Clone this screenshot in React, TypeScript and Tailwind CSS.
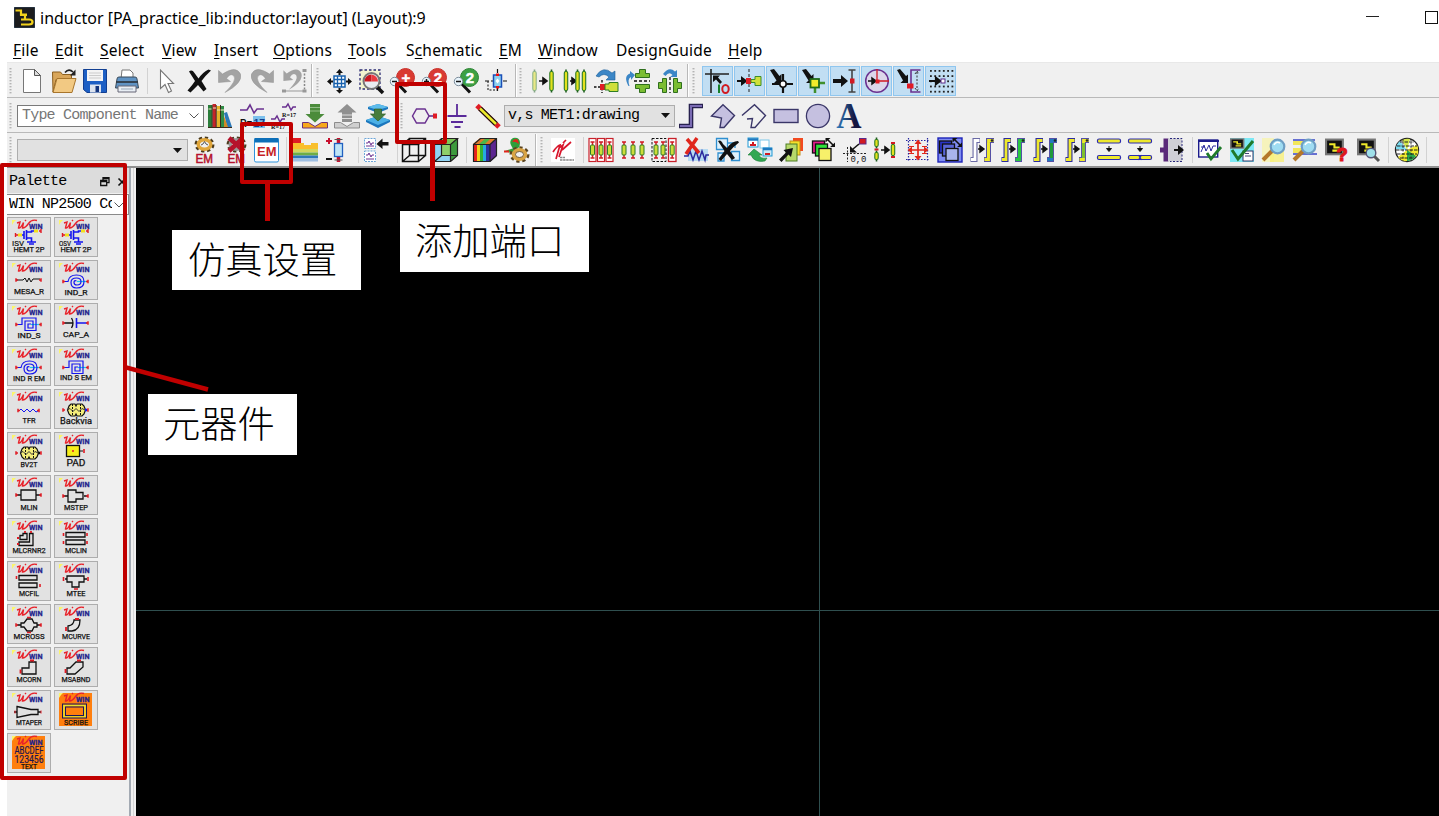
import React from "react";

type Kids = { children?: React.ReactNode };

const Ic = ({ children }: Kids) => (
  <svg width="24" height="24" viewBox="0 0 24 24" fill="none" className="block flex-none overflow-visible">
    {children}
  </svg>
);

const Grip = ({ className = "" }: { className?: string }) => (
  <svg width="4" height="28" viewBox="0 0 4 28" className={"block flex-none " + className}>
    {Array.from({ length: 9 }, (_, i) => (
      <rect key={i} x="0.5" y={1 + i * 3} width="2" height="1.4" fill="#b4b4b4" />
    ))}
  </svg>
);

const Group = ({ className, items }: { className: string; items: React.ReactNode[] }) => (
  <div className={"flex h-full flex-none items-center " + className}>
    {items.map((it, i) => (
      <div key={i} className="flex min-w-0 flex-1 items-center justify-center">
        {it}
      </div>
    ))}
  </div>
);

const Sep = ({ className = "" }: { className?: string }) => (
  <div className={"h-[26px] w-px flex-none bg-[#d2d2d2] " + className} />
);
const Divider = ({ className = "" }: { className?: string }) => (
  <div className={"h-full w-[2px] flex-none border-l border-[#b8b8b8] bg-white " + className} />
);

const magnifier = (big: string, sign: React.ReactNode, ring = "#c9302a", plus = false) => (
  <Ic>
    <path d="M7 14l9 9.500" stroke="#111" strokeWidth="3" />
    <circle cx="15.500" cy="8.500" r="9" fill={big} stroke={ring} strokeWidth="1" />
    <text x="16" y="14" textAnchor="middle" fontSize="15" fontWeight="700" fill="#fff" stroke="#fff" strokeWidth=".5" className="font-['Liberation_Sans']">
      {sign}
    </text>
    <circle cx="4.500" cy="12.500" r="4.200" fill="#e8f4fb" stroke="#7a8a99" />
    <path d={plus ? "M2 12.500h5M4.500 10v5" : "M2 12.500h5"} stroke="#111" strokeWidth="1.500" />
  </Ic>
);

const Bar = ({ x, y = 1, h = 22, fill = "#e4e21c", op = 1 }: { x: number; y?: number; h?: number; fill?: string; op?: number }) => (
  <g opacity={op}>
    <path d={`M${x} ${y - 0.5}v${h + 1}`} stroke="#1f5c20" strokeWidth="1.6" />
    <rect x={x - 1.7} y={y + 1.5} width="3.4" height={h - 3} rx="1.4" fill={fill} stroke="#2c7a25" strokeWidth="1.1" />
  </g>
);

const arrow = (x1: number, x2: number, y: number, w = 1.6) => (
  <path d={`M${x1} ${y}H${x2 - 3}M${x2 - 4} ${y - 3}L${x2} ${y}L${x2 - 4} ${y + 3}Z`} stroke="#111" strokeWidth={w} fill="#111" />
);

const sheet = (
  <Ic>
    <path d="M3.5.5h11l6 6v17h-17z" fill="#fff" stroke="#777" />
    <path d="M14.5.5v6h6z" fill="#ddd" stroke="#555" />
  </Ic>
);
const folder = (
  <Ic>
    <path d="M.500 3h8l2 2.500h9v5H4L1 23z" fill="#d9a65a" stroke="#8c5f1f" />
    <path d="M5 9.500h19L20 23.500H1z" fill="#f2c983" stroke="#a8752c" />
    <path d="M13 3.500q4-4.500 8-.5" stroke="#222" strokeWidth="1.600" />
    <path d="M23.500.500v6h-5.500z" fill="#222" />
  </Ic>
);
const floppy = (
  <Ic>
    <path d="M.5.5h23v23H4l-3.500-3z" fill="#1d5fc4" stroke="#123f92" />
    <rect x="4" y="1" width="16" height="11" fill="#f4f4f4" />
    <path d="M6 4h12M6 6.500h12M6 9h12" stroke="#ccc" />
    <rect x="7" y="15.500" width="11" height="8" fill="#dce3ee" />
    <rect x="12.500" y="17" width="3.500" height="6" fill="#14357e" />
  </Ic>
);
const printer = (
  <Ic>
    <path d="M6 10L7 1h8l3 3v6z" fill="#fff" stroke="#777" />
    <path d="M2 10q0-2 2-2h16q2 0 2 2l1.500 9H.5z" fill="#5f93c4" stroke="#3a4a59" />
    <path d="M1 13h22" stroke="#2f3c48" strokeWidth="1.800" />
    <path d="M3 17h18v6H3z" fill="#e8eef4" stroke="#667" />
    <path d="M6 20h12" stroke="#9ab" />
  </Ic>
);
const cursor = (
  <Ic>
    <path d="M5.500 1v18.500l4.500-4 3.500 8 3-1.500-3.500-7.500h5.500z" fill="#fff" stroke="#777" strokeWidth="1.100" />
  </Ic>
);
const cross = (
  <Ic>
    <path d="M2 2.500Q5 0 7.500 4l4 5.500Q16 3 21.500.500L24 1.500Q18 7 14.500 12l5 8-3 2.500L11 16 3.500 23.500.500 21.500q5-5.500 7.500-9.500z" fill="#111" />
  </Ic>
);
const undoPath = "M.5 1.500V13.500L12.500 12.500 8.500 9.500Q12 4 15.500 6.500 20 11 7 23.500 25 14 22.500 5 18-4 4.500 5z";
const undo = (
  <Ic>
    <path d={undoPath} fill="#a3a3a3" stroke="#919191" strokeWidth=".5" />
  </Ic>
);
const redo = (
  <Ic>
    <g transform="translate(24 0) scale(-1 1)">
      <path d={undoPath} fill="#a3a3a3" stroke="#919191" strokeWidth=".5" />
    </g>
  </Ic>
);
const undoAll = (
  <Ic>
    <g transform="translate(1 0) scale(.82 .88)">
      <path d={undoPath} fill="#a3a3a3" />
    </g>
    <path d="M1 22h21" stroke="#999" />
    <path d="M22.500 1v20" stroke="#888" strokeWidth="1.500" strokeDasharray="2 1.500" />
    <path d="M0 20.500h4v3H0zM20.500 20.500h4v3h-4zM20.500 0h4v3h-4z" fill="#999" />
  </Ic>
);
const pan = (
  <Ic>
    <rect x="7" y="7" width="11" height="11" fill="#fff" stroke="#1760ad" strokeWidth="1.500" />
    <path d="M10.500 7v11M14.500 7v11M7 10.500h11M7 14.500h11" stroke="#1760ad" strokeWidth="1.300" />
    <path d="M12.500 0l3.500 4h-2.500v2h-2V4H9zM12.500 24.500L16 21h-2.500v-2h-2v2H9zM0 12.500L4 9v2.500h2v2H4V16zM25 12.500L21 9v2.500h-2v2h2V16z" fill="#111" />
  </Ic>
);
const zoomArea = (
  <Ic>
    <rect x="1" y="1" width="20" height="19" stroke="#2a2a72" strokeWidth="1.300" strokeDasharray="2.500 2" fill="#f2f4cf" />
    <path d="M18 18l6 6" stroke="#111" strokeWidth="3.500" />
    <circle cx="12.500" cy="12" r="8" fill="#e9edf2" stroke="#777" strokeWidth="2" />
    <path d="M12.500 12.500V5.500a7 7 0 0 0-7 7z" fill="#c9161d" />
    <path d="M12.500 5.500a7 7 0 0 1 6.500 7h-6.500z" fill="#ea3a3f" />
  </Ic>
);
const zoomCenter = (
  <Ic>
    <path d="M12.500 0v24M0 12h24" stroke="#111" strokeWidth="1.200" strokeDasharray="4 2" />
    <path d="M3 12v9h9" stroke="#111" strokeDasharray="2 1.500" />
    <rect x="8.500" y="6" width="8" height="12" fill="#8fd0ef" stroke="#1a4fb8" strokeWidth="1.500" />
    <path d="M12.500 9.500l2 2.500-2 2.500-2-2.500z" fill="#fff" />
    <rect x="11" y="4.500" width="3" height="2.500" fill="#e11" />
    <rect x="11" y="17" width="3" height="2.500" fill="#e11" />
  </Ic>
);
const blueArc = "M2 7Q9-4 18 4l3-2v9h-9l3-3Q10 3 5 8z";
const iMove1 = (<Ic><Bar x={3.500} op={0.5} />{arrow(8, 16, 12)}<Bar x={20.500} /></Ic>);
const iMove2 = (<Ic><Bar x={3} />{arrow(7, 13, 12)}<Bar x={14.500} /><Bar x={21} /></Ic>);
const rotBar = (
  <Ic>
    <path d={blueArc} fill="#3b86c6" stroke="#1f5f99" strokeWidth=".6" />
    <path d="M0 18h6M8 11v13" stroke="#111" strokeWidth="1.400" strokeDasharray="2.500 1.500" />
    <rect x="6" y="15" width="5" height="6" fill="#e01b24" />
    <path d="M11 15h4v-1.500h9v9h-9V21h-4z" fill="#cfe03a" stroke="#2f7d24" />
  </Ic>
);
const flipV = (
  <Ic>
    <path d="M2.500 17Q-3 7 4 4.500V2l5 4-4 5V8Q1 10 3.500 17z" fill="#3b86c6" />
    <path d="M8 12h16" stroke="#111" strokeWidth="1.300" strokeDasharray="3 2" />
    <g fill="#7bbd33" stroke="#2f6f1e">
      <path d="M9.500 4.500h4v-4h6v4h4v4h-14zM9.500 15.500h14v4h-4v4h-6v-4h-4z" />
    </g>
  </Ic>
);
const flipH = (
  <Ic>
    <path d="M5 5Q11-3 17 2.500L19 1v7h-7l2.500-2Q11 2 7.500 7z" fill="#3b86c6" />
    <path d="M12 8v16" stroke="#111" strokeWidth="1.300" strokeDasharray="3 2" />
    <g fill="#7bbd33" stroke="#2f6f1e">
      <path d="M8.500 9.500v14h-4v-4h-4v-6h4v-4zM15.500 9.500v14h4v-4h4v-6h-4v-4z" />
    </g>
  </Ic>
);

const bigArrow = "M1 1l4-1 5.500 7 2-2v9H5l2.500-2.500z";
const snaps = [
  <Ic>
    <path d="M0 5h24M6 0v24" stroke="#222" strokeWidth="1.600" />
    <path d="M8 6.500h7l-2 2 4 4.500-2 2-4-4.500-3 2.500z" fill="#111" />
    <path d="M14 15.500v8.500" stroke="#17812a" strokeWidth="2" />
    <ellipse cx="20.500" cy="20" rx="3.200" ry="4" stroke="#d11a22" strokeWidth="2" />
  </Ic>,
  <Ic>
    {arrow(0, 9, 12, 2)}
    <path d="M12 0v24" stroke="#222" strokeDasharray="3 2" />
    <rect x="9" y="9" width="5" height="6" fill="#e01b24" />
    <path d="M14 10.500h4V7.500h6v9h-6v-3h-4z" fill="#cfe03a" stroke="#3c8d2a" />
  </Ic>,
  <Ic>
    <path d="M14 5v19M3 15h21" stroke="#111" strokeWidth="2.200" />
    <path d={bigArrow} fill="#111" />
    <circle cx="14" cy="15" r="3.200" fill="#fff" stroke="#111" strokeWidth="1.600" />
  </Ic>,
  <Ic>
    <path d={bigArrow} fill="#111" />
    <path d="M14 14v10M14 14h10" stroke="#3f8f2c" strokeWidth="2.500" />
    <rect x="9.500" y="10" width="8.500" height="8.500" fill="#f2ec2b" stroke="#1f6b1b" strokeWidth="1.800" />
  </Ic>,
  <Ic>
    <path d="M0 10h8V6l7 6-7 6v-4H0z" fill="#111" />
    <path d="M15.500 1h7M19 1v22M15.500 23h7" stroke="#444" strokeWidth="1.600" />
    <rect x="17" y="9.500" width="4.500" height="5" fill="#d11a22" />
  </Ic>,
  <Ic>
    <circle cx="12" cy="12" r="11.300" fill="#dcd6ea" stroke="#6a3190" strokeWidth="1.500" />
    <path d="M12 0v12h12" stroke="#d11a22" strokeWidth="1.300" />
    {arrow(3, 11, 12, 1.5)}
    <rect x="10.500" y="10.500" width="4" height="4" fill="#e01b24" />
  </Ic>,
  <Ic>
    <path d="M0 1l3-1 6 7 2-1.500V14H3.500L6 11.500z" fill="#111" />
    <path d="M23.500 1H14v22h9.500" stroke="#6a3190" strokeWidth="1.600" />
    <path d="M20 3v18M18 5l2-3 2 3M18 19l2 3 2-3" stroke="#333" strokeDasharray="2 1.500" />
    <rect x="10" y="14.500" width="6.500" height="5" fill="#e01b24" />
  </Ic>,
  <Ic>
    {Array.from({ length: 30 }, (_, i) => (
      <rect key={i} x={1 + (i % 6) * 4.3} y={1 + Math.floor(i / 6) * 5.2} width="1.8" height="1.8" fill="#222" />
    ))}
    {arrow(0, 11, 12, 2.2)}
    <rect x="12" y="10" width="4" height="4" fill="#fff" stroke="#5a2a8a" />
  </Ic>,
];

const row1: Record<string, React.ReactNode[]> = {
  a: [sheet, folder, floppy, printer],
  b: [cursor, cross, undo, redo, undoAll],
  c: [pan, zoomArea, magnifier("#d93a32", "+"), magnifier("#d93a32", "2", "#c9302a", true), magnifier("#3da043", "2", "#2c8434"), zoomCenter],
  d: [iMove1, iMove2, rotBar, flipV, flipH],
};

const books = (
  <Ic>
    <rect x="0" y="1" width="4" height="22" fill="#2b7d3b" />
    <rect x="4.500" y="0" width="3.500" height="23" fill="#c4252a" />
    <rect x="8.500" y="2" width="4" height="21" fill="#e5b32a" />
    <rect x="12.500" y="2" width="3.500" height="21" fill="#2f8c46" />
    <path d="M16 9l3-1 5 15h-5z" fill="#2b78b8" />
    <path d="M16 12v11h4z" fill="#d08a24" />
    <path d="M0 23.500h24M4.200 1v22M8.200 1v22M12.500 1v22" stroke="#3b2a18" />
    <path d="M.500 5h3M5 4h3M9 6h3.500M13 6h3" stroke="#f5e8c0" />
  </Ic>
);
const rParam = (
  <Ic>
    <path d="M0 6h7l3-5 4 8 3-4h7" stroke="#6a3190" strokeWidth="1.600" />
    <rect x="13" y="12" width="12" height="12" fill="#7cc0ec" />
    <text x="0" y="22.500" fontSize="11" fontWeight="700" fill="#111" textLength="12" lengthAdjust="spacingAndGlyphs" className="font-['Liberation_Sans']">R=</text>
    <text x="13.500" y="22.500" fontSize="10.500" fontWeight="700" fill="#123c88" className="font-['Liberation_Sans']">17</text>
  </Ic>
);
const rParams = (
  <Ic>
    <path d="M11 3h4l2-3 3 6 2-3h3M0 15h4l2-3 3 6 2-3h3" stroke="#6a3190" strokeWidth="1.400" />
    <text x="11" y="13" fontSize="7" fontWeight="700" fill="#111" textLength="14" lengthAdjust="spacingAndGlyphs" className="font-['Liberation_Serif']">R=17</text>
    <text x="0" y="24.500" fontSize="7" fontWeight="700" fill="#111" textLength="14" lengthAdjust="spacingAndGlyphs" className="font-['Liberation_Serif']">R=17</text>
  </Ic>
);
const importIcon = (
  <Ic>
    <path d="M-.5 18.500h6l6.500 4 6.500-4h6v5.500h-25z" fill="#f7a81c" stroke="#6a2f7c" />
    <path d="M7 0h10v10h4.500L12 18.500 2.500 10H7z" fill="#4b8b3b" />
    <path d="M7 3.500h10M7 7h10" stroke="#9cc491" strokeWidth=".9" />
  </Ic>
);
const exportIcon = (
  <Ic>
    <path d="M-.5 18.500h6l6.500 4 6.500-4h6v5.500h-25z" fill="#cfcfcf" stroke="#8c8c8c" />
    <path d="M12 0l9.500 8.500H17V18H7V8.500H2.500z" fill="#909090" />
    <path d="M7 11h10M7 14.500h10" stroke="#e0e0e0" />
  </Ic>
);
const pushLayer = (
  <Ic>
    <path d="M0 16l12-4 12 4v2l-12 6-12-6z" fill="#1b76bd" />
    <path d="M0 16l12-4 12 4-12 5z" fill="#4bb0e6" />
    <path d="M2 3l10-3 10 3v2l-10 4L2 5z" fill="#1b76bd" />
    <path d="M2 3l10-3 10 3-10 3z" fill="#5cbcec" />
    <path d="M8.500 5h7v5h4L12 17 4.500 10h4z" fill="#477d3d" stroke="#2c5c26" strokeWidth=".7" />
  </Ic>
);
const port = (
  <Ic>
    <path d="M-.500 12l4-7h8.500l4 7-4 7H3.500z" stroke="#6a3190" strokeWidth="1.500" />
    <path d="M16 12h6" stroke="#6a3190" strokeWidth="1.600" />
    <rect x="20" y="9.500" width="4" height="5" fill="#e01b24" />
  </Ic>
);
const ground = (<Ic><path d="M12 0v12M2.500 12h19M6 18h12M9.500 23h6" stroke="#5a2a9a" strokeWidth="1.800" /></Ic>);
const wire = (
  <Ic>
    <path d="M1 1.500L23 23" stroke="#e01b24" strokeWidth="5" />
    <path d="M4 4.500L20 20" stroke="#111" strokeWidth="5" />
    <path d="M4 4.500L20 20" stroke="#efe92b" strokeWidth="2.600" />
  </Ic>
);
const shapeFill = "#c5c0e0";
const trace = (<Ic><path d="M0 22h12V2h12" stroke="#27214f" strokeWidth="4.600" /><path d="M1 22h11V2h11" stroke="#7a6bb3" strokeWidth="2" /></Ic>);
const polygon = (<Ic><path d="M12 .700L23.500 11.500 13 23.500H9L10.500 14 .500 12z" fill={shapeFill} stroke="#3a3668" strokeWidth="1.400" /></Ic>);
const polyline = (<Ic><path d="M0 11.500L12.500.700 23.500 11.500 13 23.500H9L10.500 14.500 5 15" stroke="#3a3668" strokeWidth="1.400" /></Ic>);
const rectShape = (<Ic><rect x="0" y="5.500" width="24" height="13" fill={shapeFill} stroke="#3a3668" strokeWidth="1.400" /></Ic>);
const circleShape = (<Ic><circle cx="12" cy="12" r="11.600" fill={shapeFill} stroke="#3a3668" strokeWidth="1.300" /></Ic>);
const letterA = (
  <Ic>
    <defs>
      <linearGradient id="la"><stop offset="0" stopColor="#2f7fc0" /><stop offset=".7" stopColor="#161640" /></linearGradient>
    </defs>
    <text x="12" y="24" textAnchor="middle" fontSize="35" fontWeight="700" fill="url(#la)" className="font-['Liberation_Serif']">A</text>
  </Ic>
);

const emGear = (off: boolean) => (
  <Ic>
    <ellipse cx="12.500" cy="6.500" rx="8" ry="6" stroke="#4a3a1c" strokeWidth="4" strokeDasharray="3 2.500" />
    <ellipse cx="12.500" cy="6.500" rx="6.300" ry="4.700" fill="#f0f0f0" stroke={off ? "#9a9a9a" : "#e0a63a"} strokeWidth="3.400" />
    <path d="M9 7l2-1 1.500-2.500L14 6l2 1" stroke="#555" />
    {off && <path d="M5 0l15 13M19 0L5 13" stroke="#b5122c" strokeWidth="4.500" />}
    <text x="3.500" y="24.500" fontSize="12" stroke="#b5122c" strokeWidth=".5" textLength="17.500" lengthAdjust="spacingAndGlyphs" fill="#b5122c" className="font-['Liberation_Sans']">EM</text>
  </Ic>
);
const emWin = (
  <Ic>
    <rect x="-.500" y=".500" width="24" height="23.500" rx="1.500" fill="#fff" stroke="#2d93dc" />
    <rect x="-.500" y="0" width="24" height="4.500" fill="#0d6fb8" />
    <text x="2" y="18" fontSize="13" fontWeight="700" textLength="19.500" lengthAdjust="spacingAndGlyphs" fill="#c61f26" className="font-['Liberation_Sans']">EM</text>
  </Ic>
);
const substrate = (
  <Ic>
    <path d="M-3 0h10v6H-3z" fill="#e01b24" />
    <path d="M-3 5h13v2h7V5h7v7H-3z" fill="#f9bf2c" />
    <path d="M-3 11h27v3.500H-3z" fill="#d3d65a" />
    <path d="M-3 14.500h27v3H-3z" fill="#6fae45" />
    <path d="M-3 17.500h27v2.500H-3z" fill="#2f78b8" />
    <path d="M-3 20h27v3.500H-3z" fill="#9fbfe2" />
  </Ic>
);
const portEditor = (
  <Ic>
    <path d="M3 0v6M0 3h6" stroke="#c8102e" strokeWidth="2" />
    <path d="M0 21h6" stroke="#111" strokeWidth="2" />
    <path d="M12.500 0v24" stroke="#c8102e" strokeWidth="3.500" />
    <rect x="8.500" y="5.500" width="8" height="13" fill="#bfe4f7" stroke="#2160c0" strokeWidth="1.300" />
    <path d="M8.500 1.500h8M8.500 22h8" stroke="#555" strokeWidth="1.200" />
  </Ic>
);
const compBack = (
  <Ic>
    <rect x=".500" y=".500" width="11" height="10" fill="#fff" stroke="#6aa5d8" strokeDasharray="2 1" />
    <rect x=".500" y="13" width="11" height="10.500" fill="#fff" stroke="#6aa5d8" strokeDasharray="2 1" />
    <path d="M2 5h2l1-2 2 4 1-2h2M2 8h8M2 17h2l1-2 2 4 1-2h2M2 21h8" stroke="#6a3190" />
    <path d="M12.500 6l6-5.500V4h6v3.500h-6v3.500z" fill="#111" />
  </Ic>
);
const cubeWire = (
  <Ic>
    <path d="M.500 6.500h16v17H.500zM7.500.500h16v17h-16zM.500 6.500l7-6M16.500 6.500l7-6M16.500 23.500l7-6M.500 23.500l7-6" stroke="#111" strokeWidth="1.500" />
  </Ic>
);
const cubeSolid = (
  <Ic>
    <path d="M.500 6.500h16v17H.500z" fill="#8fd3f2" />
    <path d="M.500 6.500l7-6h16l-7 6z" fill="#7cc456" />
    <path d="M16.500 6.500l7-6v17l-7 6z" fill="#3d9a3d" />
    <path d="M7.500 7h8.500v10H7.500z" fill="#8ed06a" />
    <path d="M.500 6.500h16v17H.500zM.500 6.500l7-6h16l-7 6M16.500 23.500l7-6V.500M7.500.500v17h16M.500 23.500l7-6" stroke="#222" strokeWidth="1.200" />
  </Ic>
);
const cubeRainbow = (
  <Ic>
    <rect x="0" y="6" width="4" height="18" fill="#e8231c" />
    <rect x="4" y="6" width="3" height="18" fill="#f3d31c" />
    <rect x="7" y="6" width="3" height="18" fill="#34b233" />
    <rect x="10" y="6" width="3" height="18" fill="#27a9e0" />
    <rect x="13" y="6" width="4" height="18" fill="#2b2fa0" />
    <path d="M0 6l7-6h17l-7 6z" fill="#e07a2c" />
    <path d="M6 6l7-6h5l-6 6z" fill="#4cb648" />
    <path d="M17 6l7-6v18l-7 6z" fill="#5c2590" />
    <path d="M.500 6.500h16.500v17H.500zM.500 6.500l7-6h16v17l-6.500 6M17 6.500l6.500-6" stroke="#222" strokeWidth="1.200" />
  </Ic>
);
const farField = (
  <Ic>
    <path d="M9 12Q2 3 8 0q7-1 7 5t-6 7z" fill="#2f9e3a" />
    <path d="M7 4q3-5 6-2l1 4q-4-3-7-2z" fill="#e0261c" />
    <path d="M0 13l9-3v6z" fill="#3d9a3d" />
    <path d="M-1 13.500h5" stroke="#e0261c" strokeWidth="2" />
    <ellipse cx="14.500" cy="16.500" rx="8" ry="6.200" stroke="#5b4420" strokeWidth="4" strokeDasharray="3 2.500" />
    <ellipse cx="14.500" cy="16.500" rx="6" ry="4.700" fill="#f0f0f0" stroke="#d9a445" strokeWidth="3.600" />
    <ellipse cx="14.500" cy="16.500" rx="4" ry="3" stroke="#5b4420" strokeWidth=".8" />
  </Ic>
);
const redLogo = (
  <Ic>
    <rect width="24" height="24" fill="#fff" />
    <path d="M2 14q4-6 7-7L5 21M8 10l4-3-4 12M12 5l3-3M20 4l-9 8" stroke="#d8152b" strokeWidth="1.700" />
    <path d="M9 19.500h5M9 22h14" stroke="#888" strokeWidth="1.600" strokeDasharray="2.500 .6" />
  </Ic>
);
const MiniBar = ({ x, y = 4, h = 16 }: { x: number; y?: number; h?: number }) => (
  <g>
    <path d={`M${x - 2} ${y}h4M${x} ${y}v${h}M${x - 2} ${y + h}h4`} stroke="#d11a22" strokeWidth="1.500" />
    <rect x={x - 2} y={y + 3} width="4" height={h - 6} rx="1" fill="#cddc39" stroke="#2c7a25" />
  </g>
);
const bars3box = (<Ic>{[3.5, 12, 20.5].map((x) => (<g key={x}><rect x={x - 3.5} y=".5" width="7" height="23" fill="#fff" stroke="#c8202a" strokeWidth="1.200" /><MiniBar x={x} /></g>))}</Ic>);
const bars3 = (<Ic><MiniBar x={3} /><MiniBar x={12} /><MiniBar x={21} /></Ic>);
const bars3mix = (<Ic><rect x="0" y=".5" width="14" height="23" stroke="#111" strokeDasharray="2.500 1.500" /><rect x="16.500" y=".5" width="7.500" height="23" fill="#fff" stroke="#c8202a" strokeWidth="1.300" /><MiniBar x={4} /><MiniBar x={11} /><MiniBar x={20.2} /></Ic>);
const resX = (
  <Ic>
    <rect x="4" y="11" width="20" height="12" fill="#9fd2f2" opacity=".7" />
    <path d="M0 18h4l2-5 3 9 3-9 3 9 3-9 3 9 1-5h3" stroke="#2b2b9e" strokeWidth="1.500" />
    <path d="M3 1l12 14M13 0L2 16" stroke="#e0261c" strokeWidth="3.500" />
  </Ic>
);
const compX = (
  <Ic>
    <path d="M.500.500h11v11H.500zM15.500 13.500h8v9h-8zM2 15h6v8H2zM11 5h8v5" fill="#dff1fb" stroke="#2f8fd0" strokeWidth="1.300" />
    <path d="M2 3q3-2 5 3l4 4q5-7 11-7l1 1.500Q17 9 14 13l5 7-3 2-5-6-6 7-2.500-2 6-8z" fill="#111" />
  </Ic>
);
const swap = (
  <Ic>
    <rect x="0" y="0" width="10" height="9" fill="#fff" stroke="#1f9ad6" />
    <rect x="12" y="2" width="9" height="8" fill="#fff" stroke="#7cc7ea" />
    <rect x="15" y="10" width="9" height="8" fill="#cde8f6" stroke="#1f9ad6" />
    <path d="M0 1.500h10M15 11h9" stroke="#1f7ac0" strokeWidth="2.500" />
    <path d="M2 7h6M5 4v3M17 16h5" stroke="#d11a22" strokeWidth="2" />
    <path d="M6 11l-6 6h3q3 8 14 6l2-3q-7 1-8-3h3z" fill="#32a852" stroke="#1f7c39" strokeWidth=".6" />
  </Ic>
);
const layersArrow = (
  <Ic>
    <rect x="14" y="0" width="10" height="13" fill="#f24a20" />
    <rect x="11" y="3" width="10" height="14" fill="#f4e12b" stroke="#c08a18" />
    <rect x="7" y="6" width="11" height="17" fill="#b7d96b" stroke="#4d7d24" />
    <path d="M0 21.500L7 14.500l-2.500-2.500L14 10l-2 9-2.500-2.500L2.500 24z" fill="#111" />
  </Ic>
);
const layersCopy = (a: string, b: string, c: string, bg?: string) => (
  <Ic>
    {bg && <rect x="0" y="0" width="24" height="24" fill={bg} stroke="#1c22b8" strokeWidth="1.400" />}
    <rect x="1.500" y="3" width="12" height="12" fill={a} stroke="#111" strokeWidth="1.300" />
    <rect x="4.500" y="6" width="12" height="12" fill={b} stroke="#111" strokeWidth="1.300" />
    <rect x="8" y="10.500" width="12" height="12" fill={c} stroke="#111" strokeWidth="1.300" />
    <path d="M17 2l5 5" stroke="#111" strokeWidth="1.600" />
    <path d="M14.500 0h5l-5 4.500zM24 9h-5l5-4.500z" fill="#111" />
  </Ic>
);
const origin = (
  <Ic>
    <rect x="16.500" y=".500" width="6.500" height="5.500" fill="#d11a22" stroke="#5a2a8a" />
    <path d="M16 6l-6 5" stroke="#111" strokeWidth="1.600" />
    <path d="M7 8v6.500h7z" fill="#111" />
    <path d="M0 15.500h24M4.500 9v15" stroke="#222" strokeDasharray="2 1.500" />
    <text x="7.500" y="24" fontSize="9" fill="#111" className="font-['Liberation_Mono']" textLength="16">0,0</text>
  </Ic>
);
const barsAlign = (<Ic><Bar x={2.500} y={0} h={10} /><Bar x={2.500} y={13} h={10} /><path d="M.500 11.500h4" stroke="#d11a22" strokeWidth="2" />{arrow(7, 15, 12)}<Bar x={19} y={5} h={14} /><path d="M17 5h4M17 19h4" stroke="#d11a22" strokeWidth="2" /></Ic>);
const stretch = (
  <Ic>
    <path d="M0 2.500h24M0 21.500h24M2.500 0v24M21.500 0v24" stroke="#2626a0" strokeWidth="1.200" strokeDasharray="1.500 1.500" />
    <path d="M12 4v16M4 12h16" stroke="#e0261c" strokeWidth="1.700" />
    <path d="M12 1.500l3.500 4.500h-7zM12 22.500l3.500-4.500h-7zM1.500 12L6 8.500v7zM22.500 12L18 8.500v7z" fill="#e0261c" />
    <path d="M3 8.500h5M16 8.500h5M3 15.500h5M16 15.500h5" stroke="#e0261c" />
  </Ic>
);
const stepIcon = (l: string, r: string, rr = r) => (
  <Ic>
    <path d="M.500 21.500H5V2.500h5" stroke={l === "#fff" ? "#6a6aa5" : "#2b2b9e"} strokeWidth="5" />
    <path d="M1 21.500h4V2.500h4.500" stroke={l} strokeWidth="2.800" />
    {arrow(8, 14, 11, 1.4)}
    <path d="M14 21.500h4.500V2.500H24" stroke="#5551a5" strokeWidth="5" />
    <path d="M14.500 21.500h4V2.500h5" stroke={r} strokeWidth="2.800" />
    <path d="M18.500 20V5" stroke={rr} strokeWidth="3" />
    <circle cx="22" cy="2.500" r="1.300" fill="#222" />
  </Ic>
);
const hBars = (mark: boolean) => (
  <Ic>
    <rect x=".500" y="1" width="23" height="4" rx="1.500" fill="#eee92c" stroke="#2b2bb0" strokeWidth="1.200" />
    <rect x=".500" y="17.500" width="23" height="4" rx="1.500" fill="#eee92c" stroke="#2b2bb0" strokeWidth="1.200" />
    <path d="M12 8v4M12 13.500l-2.500-3h5z" stroke="#111" fill="#111" />
    {mark && <path d="M10.500 17l3 5M13.500 17l-3 5" stroke="#2b2bb0" strokeWidth="1.200" />}
  </Ic>
);
const edgeMove = (
  <Ic>
    <path d="M6 .500v23M6 12H0" stroke="#5a2a7a" strokeWidth="5" />
    <rect x="8" y=".500" width="14" height="23" fill="#cfcfd6" />
    <path d="M10 .500h12v23H10" stroke="#26267a" strokeDasharray="2 1.500" />
    <path d="M14 11h4V7l6 5-6 5v-4h-4z" fill="#111" />
  </Ic>
);
const check = "M9 15l4 6L23 9";
const chip = (
  <>
    <rect x="0" y=".500" width="18" height="16" fill="#777" />
    <rect x="2" y="2.500" width="14" height="12" fill="#111" />
    <path d="M4 6h5v3h5M7 12h7" stroke="#efe92b" strokeWidth="2" />
  </>
);
const checkWave = (
  <Ic>
    <rect x=".700" y="2" width="19" height="17" fill="#fff" stroke="#1c1c8c" strokeWidth="1.400" />
    <path d="M0 3h21" stroke="#1c1c8c" strokeWidth="2" />
    <path d="M3 14l3-7 2 6 3-6 2 6 2-5h3M3 9h4" stroke="#2b2b9e" />
    <path d={check} stroke="#1f7a2a" strokeWidth="2.800" />
  </Ic>
);
const checkChip = (
  <Ic>
    <rect width="24" height="24" fill="#7de8f4" />
    <g transform="scale(.8 .65)">{chip}</g>
    <rect x="13" y="13" width="10" height="10" fill="#fff" stroke="#336" />
    <path d="M15 18h6M15 15.500h4" stroke="#447" />
    <path d="M2 12l6 9L23 3" stroke="#1f7a2a" strokeWidth="3" />
  </Ic>
);
const lensTool = (bg: React.ReactNode) => (
  <Ic>
    {bg}
    <path d="M10 13L1 22" stroke="#b5772a" strokeWidth="4" />
    <circle cx="15.500" cy="8.500" r="6.800" fill="#9fdcf2" stroke="#6f9fc4" strokeWidth="2.200" />
    <path d="M12 7q2-4 6-2" stroke="#fff" strokeWidth="1.500" />
  </Ic>
);
const chipQ = (
  <Ic>
    <g transform="scale(1.050)">{chip}</g>
    <text x="17" y="23" textAnchor="middle" fontSize="19" fontWeight="700" stroke="#e0161c" strokeWidth="1" fill="#e0161c" className="font-['Liberation_Sans']">?</text>
  </Ic>
);
const chipLens = (
  <Ic>
    <g transform="scale(1.050)">{chip}</g>
    <circle cx="14" cy="15" r="4.800" fill="#9fe0ea" stroke="#557" strokeWidth="1.400" />
    <path d="M17.500 18.500l4.500 4.500" stroke="#555" strokeWidth="3" />
  </Ic>
);
const globe = (
  <Ic>
    <circle cx="12" cy="12" r="11.500" fill="#fff" stroke="#222" strokeWidth="1.300" />
    <path d="M12 12L5 3A11 11 0 0 0 1 11z" fill="#7adcf0" />
    <path d="M12 12l10-5q3 7-1 12z" fill="#efe92b" />
    <path d="M12 12L3 19q4 5 9 4z" fill="#efe92b" />
    <path d="M12 12v11q6 0 9-5z" fill="#2aa84a" />
    <path d="M12 12L7 2q5-2 8-1z" fill="#d4e84a" />
    <path d="M5 4h14M2 8h20M1 12h22M2 16h20M5 20h14" stroke="#222" strokeWidth="1.100" strokeDasharray="3.500 1" />
    <path d="M8 1v22M16 1v22" stroke="#222" strokeWidth=".8" strokeDasharray="2 1.500" />
  </Ic>
);

const menu: [string, string, string, string][] = [
  ["", "F", "ile", "w-[42px]"], ["", "E", "dit", "w-[45px]"], ["", "S", "elect", "w-[62px]"], ["", "V", "iew", "w-[52px]"],
  ["", "I", "nsert", "w-[59px]"], ["", "O", "ptions", "w-[75px]"], ["", "T", "ools", "w-[58px]"], ["S", "c", "hematic", "w-[93px]"],
  ["", "E", "M", "w-[39px]"], ["", "W", "indow", "w-[78px]"], ["", "D", "esignGuide", "w-[112px]"], ["", "H", "elp", "w-[60px]"],
];
const menuPlain = "DesignGuide";

const ends = (y = 21, a = 9, b = 34) => (
  <path d={`M${a} ${y - 1.8}v3.600M${b} ${y - 1.8}v3.600M${a} ${y}h2M${b - 2} ${y}h2`} stroke="#e01b24" strokeWidth="1.500" />
);
const round = (
  <>
    <path d="M23 21.500h10" stroke="#18c8e8" strokeWidth="1.200" />
    <path d="M10 21.500h4q1-6.500 8.500-6.500 7.500 0 7.500 6.500T22.500 28Q17 28 17 22.500q0-4.500 5.500-4.500 4.500 0 4.500 3.500T23 25q-3 0-3-2.500t2.500-1.500" stroke="#1414ee" strokeWidth="1.200" />
    {ends(21.5)}
  </>
);
const square = (
  <>
    <path d="M24 21.500h9" stroke="#18c8e8" strokeWidth="1.200" />
    <path d="M10 21.500h5v-6.500h14v12.500H18v-9.500h8v7h-5v-4h3" stroke="#1414ee" strokeWidth="1.200" />
    {ends(21.5)}
  </>
);
const hemt = (
  <>
    <path d="M11 18h6M17 14v8M19.500 13v10M19.500 15h5v-1h6M19.500 21h5v4" stroke="#1414ee" strokeWidth="1.600" />
    <path d="M20 25h9M22 27h5" stroke="#1414ee" strokeWidth="1.300" />
    <path d="M11 18h4M27 14h4" stroke="#f2e01c" strokeWidth="3" />
    <path d="M8.500 16v4M34 12v4M9 18h2M32 14h2" stroke="#e01b24" strokeWidth="1.400" />
  </>
);
const via = (c: string) => (
  <>
    <path d="M15 17l2-2h4l1 2 1-2h5l2 2 1.500 4-1.500 4-2 2h-5l-1-2-1 2h-4l-2-2-1.500-4z" fill="#f5ee7a" stroke="#111" strokeWidth="1.200" />
    <path d="M18.500 15v12M26.500 15v12" stroke="#111" strokeDasharray="2 1" />
    <path d="M13 21l3-1.500 3 3 3-3 3 3 3-3 3 1.500" stroke="#333" />
    {ends(21)}
    <path d="M31 21h2" stroke={c} strokeWidth="2.500" />
  </>
);
const blk = { stroke: "#111", strokeWidth: 1.3 };

type Tile = { label: string; art: React.ReactNode; w: number; orange?: boolean; extra?: string; y?: number };
const tiles: Tile[] = [
  { label: "HEMT 2P", extra: "ISV", art: hemt, w: 31 },
  { label: "HEMT 2P", extra: "OSV", art: hemt, w: 31 },
  { label: "MESA_R", w: 30, y: 33.5, art: (<><path d="M9 20h7l2-2 2 4 2-4 2 4 2-3h7" stroke="#111" />{ends(20)}</>) },
  { label: "IND_R", w: 23, art: round },
  { label: "IND_S", w: 23, art: square },
  { label: "CAP_A", w: 26, y: 33.5, art: (<><path d="M10 20h9M17.500 15q3 5 0 10" {...blk} /><path d="M22.500 15v10M23 20h10" stroke="#1414ee" strokeWidth="1.600" />{ends(20)}</>) },
  { label: "IND R EM", w: 32, art: round },
  { label: "IND S EM", w: 32, y: 34, art: square },
  { label: "TFR", w: 13, y: 34, art: (<><path d="M12 22l2-2 3 3 3-3 3 3 3-3 3 3 2-1" stroke="#1414ee" />{ends(21.5, 11, 32)}</>) },
  { label: "Backvia", w: 32, y: 35, art: via("#1414ee") },
  { label: "BV2T", w: 17, art: via("#111") },
  { label: "PAD", w: 19, y: 34, art: (<><rect x="12.500" y="13.500" width="13" height="11" fill="#f6ee1c" stroke="#111" strokeWidth="1.300" /><path d="M26 19h3" stroke="#111" /><path d="M30 17v4M18 19h2" stroke="#e01b24" strokeWidth="1.600" /></>) },
  { label: "MLIN", w: 17, art: (<><path d="M9 20h5M29 20h5M14 15h15v10H14z" {...blk} />{ends(20, 9, 34)}</>) },
  { label: "MSTEP", w: 24, art: (<><path d="M9 21h5M30 21h4M14 15h8v2.500h7v6.500h-7v3h-8z" {...blk} />{ends(21, 9, 34)}</>) },
  { label: "MLCRNR2", w: 33, art: (<><path d="M12 27.500h14V15.500h-3.500v8.500H12zM13 21.500v-4h3v-2h4v6zM13 21.500h7" {...blk} /><path d="M18 13v2M24 13v2M10 20h2M10 26h2" stroke="#e01b24" strokeWidth="1.800" /></>) },
  { label: "MCLIN", w: 22, art: (<><path d="M12 14.500h19v4.500H12zM12 22h19v4.500H12z" {...blk} /><path d="M9.500 15v3M33 15v3M9.500 23v3M33 23v3" stroke="#e01b24" strokeWidth="1.600" /></>) },
  { label: "MCFIL", w: 20, art: (<><path d="M12 14.500h18v4.500H12zM12 22h18v4.500H12z" {...blk} /><path d="M9.500 15v3M33 23v3" stroke="#e01b24" strokeWidth="1.600" /></>) },
  { label: "MTEE", w: 19, art: (<><path d="M11 18h2v-3h17v3h3M13 18v3h5v5h7v-5h5v-3" {...blk} /><path d="M9.500 16v4M34 16v4M20 28h4" stroke="#e01b24" strokeWidth="1.600" /></>) },
  { label: "MCROSS", w: 31, art: (<><path d="M10 21h4M30 21h4M14 19h3l3-4h5l2 4h3v4h-3l-2 4h-5l-3-4h-3z" {...blk} />{ends(21)}<path d="M20 13.500h4M20 28.500h4" stroke="#e01b24" strokeWidth="1.600" /></>) },
  { label: "MCURVE", w: 28, art: (<><path d="M14 27v-5q6-1 6-6h6q0 10-8 11z" {...blk} /><path d="M21 15h4M12 23v4" stroke="#e01b24" strokeWidth="1.800" /></>) },
  { label: "MCORN", w: 25, art: (<><path d="M15 27v-6h7v-6h7v12zM25 15v-2" {...blk} /><path d="M23 13.500h4M13.500 22.500v4" stroke="#e01b24" strokeWidth="1.800" /></>) },
  { label: "MSABND", w: 29, art: (<><path d="M13 27v-6h3l6-6h7v5l-8 7z" {...blk} /><path d="M23 13.500h4M11.500 22v4" stroke="#e01b24" strokeWidth="1.800" /></>) },
  { label: "MTAPER", w: 26, art: (<><path d="M7 22h3M10 16.500l14 3h7v5h-7l-14 3zM31 22h3" {...blk} /><path d="M34 20.500v3M8 20.500v3" stroke="#e01b24" /></>) },
  { label: "SCRIBE", w: 24, orange: true, art: (<><rect x="10" y="15.500" width="21" height="11.500" stroke="#e8e22a" strokeWidth="1.600" /><rect x="8.500" y="14" width="24" height="14" stroke="#16165c" /><rect x="11.500" y="17" width="18" height="8.500" stroke="#16165c" /></>) },
  { label: "TEXT", w: 16, orange: true, y: 36, art: (<g fill="#1c1450" stroke="#1c1450" strokeWidth=".2" fontSize="10" className="font-['Roboto']"><text x="7.500" y="20.500" textLength="29" lengthAdjust="spacingAndGlyphs">ABCDEF</text><text x="7.500" y="29.800" textLength="29" lengthAdjust="spacingAndGlyphs">123456</text></g>) },
];

const PaletteTile = ({ t }: { t: Tile }) => (
  <div className="h-[40px] w-[44px] border border-[#adadad] bg-[#e2e2e2]">
    <svg width="42" height="38" viewBox="1 1 42 38" fill="none" className="block">
      {t.orange && <rect x="5" y="3" width="33" height="33" fill="#ff7f0e" />}
      <path d="M5 3h4l-2 2-2 3z" fill="#fbf66a" />
      <path d="M10 6l3-1-1.500 6q2 1 5-5.500L15.500 11q3 0 6-4.500T30 3.500M18 4l1-1" stroke="#e8222a" strokeWidth="1.400" />
      <text x="22" y="12.200" fontSize="8" fontWeight="700" fill="#24248c" stroke="#24248c" strokeWidth=".3" textLength="13.500" lengthAdjust="spacingAndGlyphs" className="font-['Roboto']">WIN</text>
      {t.art}
      {t.extra && <text x="5" y="28.500" fontSize="7.500" fill="#111" stroke="#111" strokeWidth=".2" textLength="12" lengthAdjust="spacingAndGlyphs" className="font-['Roboto']">{t.extra}</text>}
      <text x={22} y={t.y ?? 34.5} textAnchor="middle" fontSize={t.label === "Backvia" || t.label === "PAD" ? 9 : 7.5} fill="#111" stroke="#111" strokeWidth=".25" textLength={t.w} lengthAdjust="spacingAndGlyphs" className="font-['Roboto']">
        {t.label}
      </text>
    </svg>
  </div>
);

const Chevron = () => (
  <svg width="10" height="6" viewBox="0 0 10 6" fill="none" className="block flex-none"><path d="M.500.500L5 5 9.500.500" stroke="#555" /></svg>
);
const Caret = () => (
  <svg width="9" height="5" viewBox="0 0 9 5" className="block flex-none"><path d="M0 0h9L4.500 5z" fill="#111" /></svg>
);
const mono = "font-['Liberation_Mono',monospace] text-[15px] leading-[18px] tracking-[-0.8px] whitespace-pre";
const callout = "absolute bg-white font-['Noto_Sans_CJK_SC',sans-serif] text-[37.3px] leading-[57px] font-light text-black whitespace-nowrap";

export default function App() {
  return (
    <div className="relative flex h-[816px] w-[1439px] flex-col overflow-hidden bg-white">
      <header className="flex h-[36px] flex-none items-center pl-[14px]">
        <svg width="21" height="21" viewBox="0 0 21 21" fill="none" className="mt-[-2px] block flex-none">
          <rect width="21" height="21" rx="1" fill="#1c1c1e" stroke="#2c4358" />
          <path d="M1.500 3.500h5.500v4h6M6 8h7M11 8v4.500M7 12.500h8q3.500 0 3.500 2.500t-3.500 2.500H7" stroke="#f2d21c" strokeWidth="2.200" />
        </svg>
        <h1 className="ml-[5px] w-[400px] font-['Noto_Sans',sans-serif] text-[16px] leading-none whitespace-nowrap text-black">
          inductor [PA_practice_lib:inductor:layout] (Layout):9
        </h1>
        <svg width="73" height="14" viewBox="0 0 73 14" fill="none" className="ml-auto block flex-none">
          <path d="M0 5.500h13" stroke="#222" />
          <rect x="59.500" y=".500" width="12" height="12" stroke="#111" />
        </svg>
      </header>
      <nav className="flex h-[26px] flex-none items-center pt-[3px] pl-[13px] font-['Noto_Sans',sans-serif] text-[15.5px] tracking-[0.2px] text-black">
        {menu.map(([a, u, b, w]) => (
          <div key={a + u + b} className={"flex-none whitespace-nowrap " + w}>
            {a}
            {u + b === menuPlain ? u : <span className="underline underline-offset-2">{u}</span>}
            {b}
          </div>
        ))}
      </nav>

      <div className="ml-[7px] flex h-[36px] flex-none items-center border-t border-b border-t-[#e8e8e8] border-b-[#b9b9b9] bg-[#f0f0f0] pt-px">
        <Grip className="ml-[2px]" />
        <Group className="ml-[3px] w-[127px]" items={row1.a} />
        <Sep className="ml-[4px]" />
        <Group className="ml-[3px] w-[159px]" items={row1.b} />
        <Divider className="ml-[1px]" />
        <Grip className="ml-[3px]" />
        <Group className="ml-[3px] w-[190px]" items={row1.c} />
        <Divider className="ml-[2px]" />
        <Grip className="ml-[2px]" />
        <Group className="ml-[4px] w-[159px]" items={row1.d} />
        <Divider className="ml-[1px]" />
        <Grip className="ml-[3px]" />
        <div className="ml-[6px] flex h-[30px] w-[254px] flex-none gap-px">
          {snaps.map((s, i) => (
            <div key={i} className="flex min-w-0 flex-1 items-center justify-center border border-[#8fc6ef] bg-[#c1def3]">{s}</div>
          ))}
        </div>
      </div>

      <div className="ml-[7px] flex h-[35px] flex-none items-center border-b border-[#b9b9b9] bg-[#f0f0f0] pt-px">
        <Grip className="ml-[2px]" />
        <div className="ml-[4px] flex h-[22px] w-[187px] flex-none items-center justify-between border border-[#7a7a7a] bg-white pr-[4px] pl-[4px]">
          <span className={mono + " text-[#767676]"}>Type Component Name</span>
          <Chevron />
        </div>
        <Group className="w-[190px]" items={[books, rParam, rParams, importIcon, exportIcon, pushLayer]} />
        <Grip className="ml-[6px]" />
        <Group className="ml-[5px] w-[95px]" items={[port, ground, wire]} />
        <div className="flex h-[22px] w-[171px] flex-none items-center justify-between border border-[#adadad] bg-[#e1e1e1] pr-[4px] pl-[3px]">
          <span className={mono + " text-black"}>v,s MET1:drawing</span>
          <Caret />
        </div>
        <Group className="w-[190px]" items={[trace, polygon, polyline, rectShape, circleShape, letterA]} />
      </div>

      <div className="ml-[7px] flex h-[35px] flex-none items-center border-b-2 border-[#909090] bg-[#f0f0f0] pt-px">
        <Grip className="ml-[2px]" />
        <div className="ml-[4px] flex h-[22px] w-[171px] flex-none items-center justify-end border border-[#adadad] bg-[#e1e1e1] pr-[5px]">
          <Caret />
        </div>
        <Group className="w-[95px]" items={[emGear(false), emGear(true), emWin]} />
        <Sep className="ml-[3px]" />
        <Group className="ml-[3px] w-[64px]" items={[substrate, portEditor]} />
        <Sep className="ml-[4px]" />
        <Group className="ml-[1px] w-[32px]" items={[compBack]} />
        <Sep className="ml-[5px]" />
        <Group className="ml-0 w-[64px]" items={[cubeWire, cubeSolid]} />
        <Sep className="ml-[4px]" />
        <Group className="ml-[2px] w-[64px]" items={[cubeRainbow, farField]} />
        <Divider className="ml-[2px]" />
        <Grip className="ml-[3px]" />
        <Group className="ml-[3px] w-[32px]" items={[redLogo]} />
        <Sep className="ml-[4px]" />
        <Group
          className="ml-px w-[603px]"
          items={[
            bars3box, bars3, bars3mix, resX, compX, swap, layersArrow, layersCopy("#e81c8c", "#2ee03a", "#f7f06a"), origin, barsAlign, stretch,
            layersCopy("#2a34c8", "#5a66d8", "#a9b4ec", "#7f8cf0"), stepIcon("#fff", "#eee92c"), stepIcon("#eee92c", "#28c840"),
            stepIcon("#eee92c", "#1f7ac0", "#1f9a3a"), stepIcon("#eee92c", "#eee92c", "#7fc02c"), hBars(false), hBars(true), edgeMove,
          ]}
        />
        <Sep className="ml-[4px]" />
        <Group
          className="ml-px w-[191px]"
          items={[
            checkWave, checkChip,
            lensTool(<><path d="M0 0h12v24H0z" fill="#faf59a" opacity=".6" /><path d="M8 10h14v14H8z" fill="#faf06a" opacity=".7" /></>),
            lensTool(<><path d="M0 2h22M0 16h24" stroke="#3a46c8" strokeWidth="1.500" /><path d="M0 3h10v4H0zM0 10h8v5H0z" fill="#f2e65a" /></>),
            chipQ, chipLens,
          ]}
        />
        <Sep className="ml-[3px]" />
        <Group className="ml-[2px] w-[31px]" items={[globe]} />
        <Sep className="ml-[4px]" />
      </div>

      <main className="flex min-h-0 flex-1">
        <aside className="ml-[7px] flex w-[122px] flex-none flex-col bg-[#f0f0f0]">
          <div className="flex h-[25px] flex-none items-center bg-[#dcdcdc] pt-[2px] pl-[2px]">
            <span className={mono + " flex-1 text-black"}>Palette</span>
            <svg width="28" height="10" viewBox="0 0 28 10" fill="none" className="mr-[1px] block">
              <path d="M3 3V.700h6v5H6.500M.700 3.500h6v5h-6zM.700 4.500h6M3 1.500h6" stroke="#111" strokeWidth="1.300" />
              <path d="M18.500 1.500l7 7M25.500 1.500l-7 7" stroke="#111" strokeWidth="1.600" />
            </svg>
          </div>
          <div className="mt-px flex h-[21px] flex-none items-center justify-between overflow-hidden border border-l-0 border-[#8a8a8a] bg-white pr-[4px] pl-[2px]">
            <span className={mono + " w-[103px] overflow-hidden text-black"}>WIN NP2500 Co</span>
            <Chevron />
          </div>
          <div className="mt-[2px] grid w-[91px] grid-cols-2 gap-[3px]">
            {tiles.map((t, i) => (
              <PaletteTile key={i} t={t} />
            ))}
          </div>
        </aside>
        <div className="flex w-[7px] flex-none border-l-2 border-[#a3aab3] bg-[#f0f0f0]">
          <div className="ml-[2px] w-px bg-[#d5d5d5]" />
        </div>
        <section className="flex flex-1 flex-col bg-black">
          <div className="flex h-[443px] border-b border-[#2f4f4f]">
            <div className="w-[684px] border-r border-[#2f4f4f]" />
          </div>
          <div className="w-[684px] flex-1 border-r border-[#2f4f4f]" />
        </section>
      </main>

      <div className="absolute top-[163px] left-0 h-[617px] w-[127px] rounded-[2px] border-4 border-[#c00000]" />
      <div className="absolute top-[122px] left-[240px] h-[62px] w-[53px] rounded-[2px] border-4 border-[#c00000]" />
      <div className="absolute top-[184px] left-[265px] h-[37px] w-[5px] bg-[#c00000]" />
      <div className="absolute top-[82px] left-[395px] h-[62px] w-[52px] rounded-[2px] border-4 border-[#c00000]" />
      <div className="absolute top-[143px] left-[430px] h-[58px] w-[5px] bg-[#c00000]" />
      <svg width="84" height="30" viewBox="0 0 84 30" className="absolute top-[364px] left-[126px]">
        <path d="M0 3.500L82 25.500" stroke="#c00000" strokeWidth="4.500" />
      </svg>
      <div className={callout + " top-[230px] left-[172px] h-[60px] w-[189px] pl-[16px]"}>仿真设置</div>
      <div className={callout + " top-[211px] left-[400px] h-[61px] w-[189px] pl-[15px]"}>添加端口</div>
      <div className={callout + " top-[394px] left-[148px] h-[61px] w-[149px] pl-[15px]"}>元器件</div>
    </div>
  );
}
